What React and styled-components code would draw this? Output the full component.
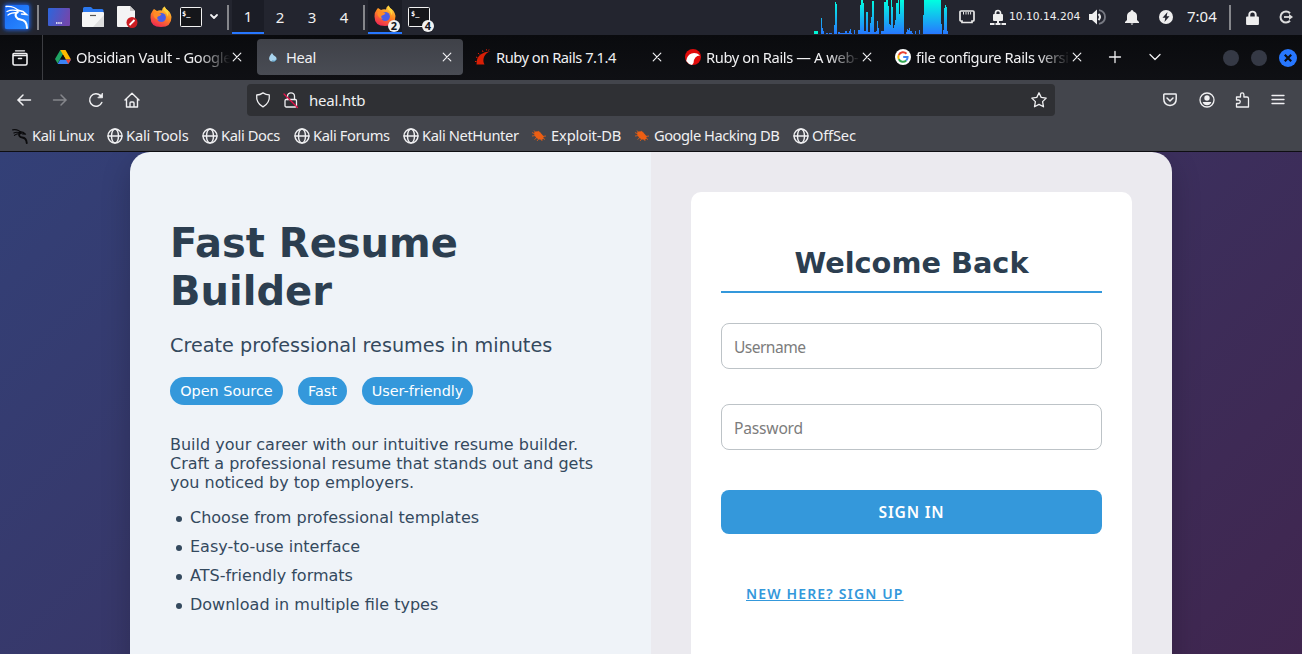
import React from "react";
import styled, { createGlobalStyle } from "styled-components";

const Global = createGlobalStyle`
  * { box-sizing: border-box; }
  html, body { margin: 0; padding: 0; }
  body { overflow: hidden; background: #0c0d11; }
`;

const ui = `"Noto Sans", "Open Sans", sans-serif`;
const page = `"DejaVu Sans", Verdana, sans-serif`;

const Screen = styled.div`
  width: 1302px;
  height: 654px;
  display: flex;
  flex-direction: column;
  overflow: hidden;
  font-family: ${ui};
`;

/* ---------- desktop panel ---------- */
const Panel = styled.header`
  height: 35px;
  flex: none;
  display: flex;
  align-items: stretch;
  justify-content: space-between;
  background: #23252f;
  color: #f0f0f0;
`;
const PanelGroup = styled.div`
  display: flex;
  align-items: stretch;
`;
const Slot = styled.div`
  width: ${(p) => p.$w}px;
  flex: none;
  display: flex;
  align-items: center;
  justify-content: center;
  padding-bottom: 1px;
  position: relative;
  svg { display: block; overflow: visible; }
`;
const PanelRule = styled.div`
  width: 2px;
  height: 25px;
  align-self: flex-start;
  margin: 5px 3px 0;
  background: #85868b;
  flex: none;
`;
const Workspace = styled(Slot)`
  height: 34px;
  padding-bottom: ${(p) => (p.$active ? 0 : 1)}px;
  font-size: 15px;
  border-bottom: ${(p) => (p.$active ? "2px solid #2777ff" : "0")};
  background: ${(p) => (p.$active ? "#1b1d26" : "transparent")};
`;
const Count = styled.span`
  position: absolute;
  right: 2px;
  bottom: ${(p) => p.$b}px;
  width: 12px;
  height: 12px;
  border-radius: 50%;
  background: #f2f2f2;
  color: #15161c;
  font: 700 11px/12px ${ui};
  text-align: center;
`;
const PanelText = styled.div`
  width: ${(p) => p.$w}px;
  flex: none;
  white-space: nowrap;
`;
const VpnAddress = styled(PanelText)`
  font: 10.7px/33px ${page};
`;
const Clock = styled(PanelText)`
  padding-left: 9px;
  font-size: 15px;
  line-height: 33px;
`;

/* ---------- browser chrome ---------- */
const TabBar = styled.div`
  height: 45px;
  flex: none;
  display: flex;
  background: linear-gradient(#0a0b0e, #0f1014);
  color: #f0f0f2;
`;
const PinnedView = styled(Slot)`
  border-right: 1px solid #3c3d42;
  margin-right: 4px;
  padding: 0 3px 0 0;
`;
const Tab = styled.div`
  width: 206px;
  height: 36px;
  flex: none;
  margin: 4px 4px 0 0;
  padding: 0 8px;
  display: flex;
  align-items: center;
  border-radius: 4px;
  background: ${(p) => (p.$active ? "linear-gradient(#3f4148, #494c54)" : "transparent")};
  svg { flex: none; display: block; }
`;
const TabTitle = styled.div`
  width: 156px;
  padding-left: 0;
  margin-left: 5px;
  flex: none;
  white-space: nowrap;
  font-size: 14.7px;
  line-height: 24px;
  letter-spacing: ${(p) => p.$ls}px;
  ${(p) => p.$fade && "mask-image: linear-gradient(90deg, #000 78%, transparent 99%);"}
`;
const WindowButton = styled.i`
  width: ${(p) => (p.$close ? 18 : 16)}px;
  height: ${(p) => (p.$close ? 18 : 16)}px;
  border-radius: 50%;
  background: ${(p) => (p.$close ? "#2777ff" : "#353945")};
  display: flex;
  align-items: center;
  justify-content: center;
`;
const WindowButtons = styled.div`
  display: flex;
  align-items: center;
  gap: 12px;
  margin-left: auto;
  padding-right: 5px;
`;
const NavBar = styled.div`
  height: 40px;
  flex: none;
  display: flex;
  align-items: center;
  padding-left: 6px;
  background: #43454c;
  color: #f0f0f2;
`;
const AddressBar = styled.div`
  width: 808px;
  height: 32px;
  margin: 0 97px 0 97px;
  display: flex;
  align-items: center;
  background: #2f3034;
  border-radius: 4px;
`;
const Address = styled.span`
  flex: 1;
  padding-left: 6px;
  font-size: 15px;
  letter-spacing: -0.2px;
`;
const Bookmarks = styled.nav`
  height: 32px;
  flex: none;
  display: flex;
  padding-left: 12px;
  border-bottom: 1px solid #0e0e12;
  background: #43454c;
  color: #f0f0f2;
`;
const Bookmark = styled.div`
  width: ${(p) => p.$w}px;
  flex: none;
  display: flex;
  align-items: center;
  gap: ${(p) => p.$gap}px;
  font-size: 14.7px;
  line-height: 31px;
  letter-spacing: ${(p) => p.$ls}px;
  white-space: nowrap;
  svg { flex: none; }
`;

/* ---------- page ---------- */
const Viewport = styled.main`
  flex: 1;
  min-height: 0;
  overflow: hidden;
  display: flex;
  justify-content: center;
  background: linear-gradient(135deg, #334077, #40264f);
  font-family: ${page};
`;
const Card = styled.div`
  width: 1042px;
  height: 620px;
  display: flex;
  border-radius: 20px;
  overflow: hidden;
  box-shadow: 0 10px 30px rgba(0, 0, 0, 0.2);
`;
const Intro = styled.section`
  width: 521px;
  padding: 67px 40px 0;
  background: #eff3f8;
  color: #34495e;
`;
const Title = styled.h1`
  margin: 0 0 19px;
  font-size: 40px;
  line-height: 48px;
  color: #2c3e50;
`;
const Subtitle = styled.p`
  margin: 0 0 19px;
  font-size: 19.2px;
  line-height: 24px;
  letter-spacing: 0.02px;
`;
const Badges = styled.div`
  display: flex;
  gap: 15px;
  margin-bottom: 30px;
`;
const Badge = styled.span`
  width: ${(p) => p.$w}px;
  height: 28px;
  border-radius: 15px;
  background: #3498db;
  color: #fff;
  font-size: 14.4px;
  line-height: 28px;
  text-align: center;
  white-space: nowrap;
`;
const Copy = styled.p`
  margin: 0 0 16px;
  font-size: 16px;
  line-height: 19px;
`;
const Features = styled.ul`
  margin: 0;
  padding: 0;
  list-style: none;
  font-size: 16px;
  line-height: 19px;
`;
const Feature = styled.li`
  display: flex;
  align-items: center;
  margin-bottom: 10px;
  padding-left: 6px;
  &::before {
    content: "";
    width: 6px;
    height: 6px;
    margin: 2px 8px 0 0;
    border-radius: 50%;
    background: #34495e;
  }
`;
const FormSide = styled.section`
  flex: 1;
  padding: 40px;
  background: #ebeaef;
`;
const FormBox = styled.form`
  height: 600px;
  padding: 50px 30px 0;
  display: flex;
  flex-direction: column;
  background: #fff;
  border-radius: 10px;
`;
const FormTitle = styled.h2`
  margin: 0 0 30px;
  height: 51px;
  font-size: 28.8px;
  line-height: 42px;
  text-align: center;
  color: #2c3e50;
  border-bottom: 2px solid #3498db;
`;
const Input = styled.input`
  height: 46px;
  flex: none;
  margin: 0 0 35px;
  padding: 1px 12px 0;
  border: 1px solid #bdc3c7;
  border-radius: 8px;
  background: #fff;
  font: 15.6px ${ui};
  letter-spacing: ${(p) => p.$ls}px;
  outline: 0;
  &::placeholder { color: #7c7c7c; opacity: 1; }
`;
const Submit = styled.button`
  height: 44px;
  flex: none;
  margin: 5px 0 46px;
  border: 0;
  border-radius: 8px;
  background: #3498db;
  color: #fff;
  font: 600 15.6px ${ui};
  letter-spacing: 0.8px;
`;
const SignUp = styled.a`
  align-self: flex-start;
  margin-left: 25px;
  font: 600 14px/28px ${ui};
  letter-spacing: 1.15px;
  color: #3498db;
  text-decoration: underline;
`;

/* ---------- icons ---------- */
const Svg = ({ s = 16, w, h, v, children, ...rest }) => (
  <svg width={w || s} height={h || s} viewBox={v || `0 0 ${w || s} ${h || s}`} fill="none" {...rest}>{children}</svg>
);
const Line = (props) => <Svg stroke="#f0f0f2" strokeWidth="1.3" strokeLinecap="round" strokeLinejoin="round" {...props} />;

const Dragon = () => (
  <Svg s={16} v="0 0 26 26" stroke="#0b0b0d" strokeLinecap="round" strokeLinejoin="round">
    <path d="M1 3c5-1 11 1 14 5M3 8c4-2 8-1 12 0M4 12c3-3 7-3 11-3" strokeWidth="1.8" />
    <path d="M13 6l5 1 4 3-5-.3" strokeWidth="2" />
    <path d="M13.500 8c-4 3-1 7 3 7.500 4.500.5 7 3 7.500 9" strokeWidth="3" />
  </Svg>
);
const KaliMenu = () => (
  <Svg w={26} h={26}>
    <defs>
      <linearGradient id="km" x2="1" y2="1"><stop stopColor="#1768f5" /><stop offset="1" stopColor="#2a8aff" /></linearGradient>
      <filter id="glow" x="-.3" y="-.3" width="1.6" height="1.6"><feGaussianBlur stdDeviation="2" /></filter>
    </defs>
    <rect x="0" y="0" width="26" height="26" rx="3" fill="#1d62e8" filter="url(#glow)" />
    <rect x="1" y="1" width="24" height="24" rx="1.500" fill="url(#km)" />
    <g stroke="#fff" strokeLinecap="round" fill="none">
      <path d="M2 2.500c5-.5 10 1.500 13 4.500M3 7.500c4-2 8-1.500 11-.5M4 11c3-2.500 6-2.500 10-2.500" strokeWidth="1.300" />
      <path d="M13 6l6 1.500 3.500 3-5-.5" strokeWidth="1.500" />
      <path d="M13.500 8c-4 3-1 7 3 7.500 4 .5 6.500 3 6.500 8.500" strokeWidth="2" />
    </g>
  </Svg>
);
const Desktop = () => (
  <Svg w={22} h={18}>
    <defs><linearGradient id="dk" x2="1" y2=".3"><stop stopColor="#2b66dd" /><stop offset="1" stopColor="#7048ae" /></linearGradient></defs>
    <rect width="22" height="18" rx="1" fill="url(#dk)" />
    <path d="M8 15h1.500m.7 0h1.500m.7 0h1.500" stroke="#fff" strokeWidth="1.500" />
  </Svg>
);
const Files = () => (
  <Svg w={22} h={20}>
    <path d="M1 8V1.500Q1 0 2.500 0H9l2 2h9q1.500 0 1.500 1.500V8z" fill="#2b78ee" />
    <rect y="5" width="22" height="15" rx="1" fill="#f5f5f5" />
    <path d="M22 8v11q0 1-1 1h-10z" fill="#dedede" />
    <path d="M8 8.500h6" stroke="#555" strokeWidth="1.200" />
  </Svg>
);
const Editor = () => (
  <Svg w={20} h={22}>
    <path d="M1 0h12l5 5v16H1q-1 0-1-1V1q0-1 1-1z" fill="#f4f4f4" />
    <path d="M13 0l5 5h-5z" fill="#c9c9c9" />
    <circle cx="15" cy="16.500" r="5.500" fill="#cc1d22" />
    <path d="M12.500 19l5-5" stroke="#fff" strokeWidth="1.800" />
  </Svg>
);
const Firefox = () => (
  <Svg w={22} h={22}>
    <defs><linearGradient id="fx" x1=".8" y1="0" x2=".3" y2="1"><stop stopColor="#ffe04a" /><stop offset=".45" stopColor="#ff8a20" /><stop offset="1" stopColor="#ef2653" /></linearGradient></defs>
    <path d="M4 3l3 2q2-1 5-.5Q12 2 14.500.5q1 2.500 3.500 4t3.500 6.500q0 10-10.500 10T.5 11.500Q.5 7 2.500 5q.5-1 1.500-2z" fill="url(#fx)" />
    <circle cx="11.300" cy="11.500" r="4.600" fill="#4b5ee8" />
    <path d="M3.500 7q3-2 5 0l3 1q-1 2-3.500 2.500Q6 12 9 14q-4-.5-5.500-4z" fill="#ff8b27" />
    <path d="M14.500.5q-2 3 .5 5t2 5q2-3 1-6-2.500-1.500-3.500-4z" fill="#ffd43c" />
  </Svg>
);
const TermText = styled.span`
  position: absolute;
  left: ${(p) => p.$x}px;
  top: 10px;
  color: #fff;
  font: 700 7px/8px "DejaVu Sans Mono", monospace;
`;
const Terminal = () => (
  <Svg w={22} h={20}><rect x=".5" y=".5" width="21" height="19" rx="1" fill="#15161a" stroke="#f2f2f2" /></Svg>
);
const Close = () => <Line s={10} strokeWidth="1.200"><path d="M1.200 1.200l7.600 7.600M8.800 1.200L1.200 8.800" /></Line>;
const Drive = () => (
  <Svg w={16} h={14}>
    <path d="M5.300 0h5.200L5.200 9 2.600 13.500 0 9z" fill="#1fa463" />
    <path d="M5.300 0h5.200L16 9.500h-5.300z" fill="#ffba00" />
    <path d="M5.200 9.500H16l-2.700 4.500H2.600z" fill="#3b82f4" />
    <path d="M10.800 9.500H16l-2.700 4.500z" fill="#e8453c" />
    <path d="M8 4.800l2.800 4.700H5.200z" fill="#0d0e12" />
  </Svg>
);
const Drop = () => <Svg s={16}><path d="M7 4q1 2.500 4 4 1.500 2.500-1 4Q6 13.500 4.500 11T7 4z" fill="#a9d4ee" /><path d="M7 12q3 1 4.500-1.500" stroke="#4f93ba" /></Svg>;
const Rails = () => (
  <Svg s={16}>
    <path d="M1.500 15.500q0-7 4-10T15.500 2.200Q10.500 4 9 8t.5 7.500z" fill="#d81f06" />
    <path d="M1 8l1.500.7M3 4l1.200 1.300M7.500 1.500l.5 1.500M11.500.3l.2 1.200M0 12.500h1.500M14 .5l-.5 1" stroke="#d81f06" />
  </Svg>
);
const RailsRound = () => <Svg s={16}><circle cx="8" cy="8" r="8" fill="#e00b0b" /><path d="M1.200 12Q2 6 6.500 4.500T15 6.500Q9 6.500 8.500 14L7 16Q3.500 15.500 1.200 12z" fill="#fff" /></Svg>;
const Google = () => (
  <Svg s={16}>
    <circle cx="8" cy="8" r="8" fill="#fff" />
    <g strokeWidth="2"><path d="M11.500 4.800A4.700 4.700 0 0 0 3.800 6" stroke="#ea4335" /><path d="M3.800 6a4.700 4.700 0 0 0 0 4.200" stroke="#fbbc05" /><path d="M3.800 10.200a4.700 4.700 0 0 0 7.400 1.300" stroke="#34a853" /><path d="M11.200 11.500q1.500-1.300 1.400-3.500H8.200" stroke="#4285f4" /></g>
  </Svg>
);
const Globe = () => <Line s={16} strokeWidth="1.400"><circle cx="8" cy="8" r="7" /><ellipse cx="8" cy="8" rx="3.500" ry="7" /><path d="M1 8h14" /></Line>;
const Bug = () => (
  <Svg s={16}>
    <path d="M3.500 4q3.500-2 6 .7t3 3.600q.3 3.500-2.500 3.500T5 9.500Q2.500 6.500 3.500 4z" fill="#ec5e13" />
    <path d="M1 4.500l4 2M1 8l4-.5M3.500 11.500l3-2.500M6 13l2-2.500M10.500 11l.5 2M7 3l2.500 2M11 8.500l4-.5M11.500 10l2.500 1.500M3 2.500L5 5" stroke="#ec5e13" strokeWidth=".8" />
  </Svg>
);
const Padlock = ({ w = 12, h = 14 }) => <Svg w={w} h={h} v="0 0 12 14"><path d="M3 7V4.500a3 3 0 0 1 6 0V7" stroke="#eee" strokeWidth="1.800" /><rect y="6" width="12" height="8" rx="1" fill="#eee" /></Svg>;

/* [x offset, width, top], one unit is a third of a pixel */
const load = [
  [0, 12, 93], [21, 3, 54], [24, 3, 83], [27, 3, 92], [36, 6, 99], [45, 9, 99], [60, 3, 74], [63, 3, 6], [66, 3, 12],
  [72, 6, 97], [78, 15, 99], [93, 6, 93], [99, 6, 99], [105, 3, 94], [108, 3, 87], [111, 3, 98], [120, 3, 90],
  [132, 6, 90], [138, 3, 14], [141, 6, 0], [147, 3, 8], [150, 6, 94], [156, 6, 37], [162, 6, 97], [168, 3, 69],
  [171, 3, 50], [174, 6, 2], [180, 6, 95], [186, 3, 94], [189, 3, 62], [192, 3, 84], [201, 9, 94], [210, 6, 5],
  [216, 6, 0], [222, 3, 18], [225, 3, 72], [228, 3, 75], [231, 3, 0], [234, 3, 20], [237, 3, 84], [240, 3, 74],
  [243, 3, 60], [246, 6, 8], [252, 3, 0], [255, 3, 42], [258, 12, 0], [276, 3, 96], [279, 3, 87], [282, 3, 90],
  [285, 3, 84], [288, 6, 94], [294, 3, 98], [303, 3, 93], [315, 3, 90], [327, 3, 45], [330, 51, 0], [381, 3, 72],
  [387, 3, 90], [390, 3, 24], [393, 3, 15], [396, 3, 22], [399, 3, 94],
];
const Graph = () => (
  <Svg w={134} h={34} v="0 0 402 102">
    <defs><linearGradient id="ld" gradientUnits="userSpaceOnUse" x1="0" y1="0" x2="0" y2="102"><stop stopColor="#00ffe0" /><stop offset="1" stopColor="#2777ff" /></linearGradient></defs>
    {load.map(([x, w, y], i) => <rect key={i} x={x} y={y} width={w} height={102 - y} fill={i ? "url(#ld)" : "#00f5d4"} shapeRendering="crispEdges" />)}
  </Svg>
);

/* name, icon, width, letter spacing, gap */
const bookmarks = [
  ["Kali Linux", Dragon, 95, -0.4, 4], ["Kali Tools", Globe, 95, -0.2, 3], ["Kali Docs", Globe, 92, -0.4, 3],
  ["Kali Forums", Globe, 109, -0.4, 3], ["Kali NetHunter", Globe, 128, -0.4, 3], ["Exploit-DB", Bug, 103, -0.15, 4],
  ["Google Hacking DB", Bug, 159, -0.48, 4], ["OffSec", Globe, 80, -0.2, 3],
];
/* title, icon, fades out, letter spacing */
const tabs = [
  ["Obsidian Vault - Google", Drive, true, -0.3], ["Heal", Drop, false, -0.3],
  ["Ruby on Rails 7.1.4", Rails, false, -0.48], ["Ruby on Rails — A web-", RailsRound, true, -0.4],
  ["file configure Rails versi", Google, true, -0.4],
];

export default function App() {
  return (
    <Screen>
      <Global />
      <Panel>
        <PanelGroup>
          <Slot $w={34}><KaliMenu /></Slot>
          <PanelRule />
          <Slot $w={34}><Desktop /></Slot>
          <Slot $w={34}><Files /></Slot>
          <Slot $w={34}><Editor /></Slot>
          <Slot $w={34}><Firefox /></Slot>
          <Slot $w={26}><Terminal /><TermText $x={4}>$_</TermText></Slot>
          <Slot $w={20}><Line w={8} h={6} strokeWidth="1.800"><path d="M1 1l3 3 3-3" /></Line></Slot>
          <PanelRule />
          <Workspace $w={32} $active>1</Workspace>
          <Workspace $w={32}>2</Workspace>
          <Workspace $w={32}>3</Workspace>
          <Workspace $w={32}>4</Workspace>
          <PanelRule />
          <Workspace $w={34} $active><Firefox /><Count $b={0}>2</Count></Workspace>
          <Slot $w={34}><Terminal /><TermText $x={9}>$_</TermText><Count $b={3}>4</Count></Slot>
        </PanelGroup>
        <PanelGroup>
          <Graph />
          <Slot $w={38}>
            <Svg w={16} h={14}><path d="M2 1h12q1 0 1 1v8q0 1-1 1h-1v1.500H3V11H2q-1 0-1-1V2q0-1 1-1z" stroke="#e8e8e8" strokeWidth="1.700" /><path d="M4.500 2v2.500M7 2v2.500M9.300 2v2.500M11.600 2v2.500" stroke="#e8e8e8" /></Svg>
          </Slot>
          <Slot $w={23}>
            <Svg w={16} h={17}><path d="M5.500 6V4a2.500 2.500 0 0 1 5 0v2" stroke="#eee" strokeWidth="1.700" /><rect x="3" y="5" width="10" height="7" rx="1" fill="#eee" /><path d="M8 12v2M0 15h4.500M5.500 15h5M11.500 15H16" stroke="#eee" strokeWidth="2" /></Svg>
          </Slot>
          <VpnAddress $w={76}>10.10.14.204</VpnAddress>
          <Slot $w={25}>
            <Svg w={17} h={16}><path d="M0 5h3l5-4.500v15L3 11H0z" fill="#eee" /><path d="M9.500 5q3 3 0 6" stroke="#eee" strokeWidth="2" /><path d="M10 1.200q6 1.300 6 6.800t-6 6.800" stroke="#777982" strokeWidth="1.800" /></Svg>
          </Slot>
          <Slot $w={44}>
            <Svg w={14} h={15}><path d="M7 0q1.300 0 1.500 1.500Q12 2.500 12 6v4l2 2v1H0v-1l2-2V6q0-3.500 3.500-4.500Q5.700 0 7 0zM5.500 13.500h3L7 15z" fill="#eee" /></Svg>
          </Slot>
          <Slot $w={24}>
            <Svg s={14}><circle cx="7" cy="7" r="7" fill="#eee" /><path d="M8.500 2L3.500 7.800h2.800L5.500 12l5-5.800H7.700z" fill="#23252f" /></Svg>
          </Slot>
          <Clock $w={48}>7:04</Clock>
          <PanelRule />
          <Slot $w={36}><Padlock w={13} h={15} /></Slot>
          <Slot $w={32}>
            <Svg s={14}><path d="M11 3.200a5.500 5.500 0 1 0 0 7.600" stroke="#ddd" strokeWidth="2" /><path d="M5 7h6" stroke="#ddd" strokeWidth="1.800" /><path d="M10 4l4 3-4 3z" fill="#ddd" /></Svg>
          </Slot>
        </PanelGroup>
      </Panel>

      <TabBar>
        <PinnedView $w={43}>
          <Line s={16} strokeWidth="1.600"><path d="M3.500.8h9" strokeWidth="1.300" /><path d="M1 4.500q0-1 1-1h12q1 0 1 1M1 5v8.500Q1 15 2.500 15h11q1.500 0 1.500-1.500V5M1 5.500h14M6.500 8.500h3" /></Line>
        </PinnedView>
        {tabs.map(([title, Icon, fade, ls]) => (
          <Tab key={title} $active={title === "Heal"}>
            <Icon />
            <TabTitle $fade={fade} $ls={ls}>{title}</TabTitle>
            <Close />
          </Tab>
        ))}
        <Slot $w={35}><Line s={12}><path d="M6 .5v11M.5 6h11" /></Line></Slot>
        <Slot $w={46}><Line w={12} h={8}><path d="M1 1.500l5 5 5-5" /></Line></Slot>
        <WindowButtons>
          <WindowButton /><WindowButton />
          <WindowButton $close><Svg s={8}><path d="M.8.800l6.400 6.400M7.200.800L.8 7.200" stroke="#0d0e12" strokeWidth="2.200" /></Svg></WindowButton>
        </WindowButtons>
      </TabBar>

      <NavBar>
        <Slot $w={36}><Line w={14} h={12} strokeWidth="1.500"><path d="M13.500 6H.8M6 1L1 6l5 5" /></Line></Slot>
        <Slot $w={36}><Line w={14} h={12} stroke="#85868b" strokeWidth="1.500"><path d="M.5 6h12.700M8 1l5 5-5 5" /></Line></Slot>
        <Slot $w={36}><Line s={16} strokeWidth="1.500"><path d="M13.800 10.500A6.300 6.300 0 1 1 12.500 3.600" /><path d="M14.500 1.500v4.300h-4.300z" fill="#f0f0f2" strokeWidth=".8" /></Line></Slot>
        <Slot $w={36}><Line s={16} strokeWidth="1.400"><path d="M1 8l7-6.700L15 8M2.500 7v8h11V7M6 15v-4q0-1 1-1h2q1 0 1 1v4" /></Line></Slot>
        <AddressBar>
          <Slot $w={32}><Line s={16}><path d="M8 .9q3 2 6.300 2 .8 8-6.300 12Q.9 11 1.700 3 5 3 8 .9z" /></Line></Slot>
          <Slot $w={24}><Line s={16}><rect x="2" y="7.500" width="11.500" height="7.500" rx="1.200" /><path d="M4.500 7.500V4.300a3.500 3.500 0 0 1 7 0v3.200" /><path d="M1 2l13.500 13.500" stroke="#e8114b" /></Line></Slot>
          <Address>heal.htb</Address>
          <Slot $w={32}><Line s={16}><path d="M8 .8l2.200 4.600 5 .7-3.600 3.500.9 5.200L8 12.400l-4.500 2.400.9-5.200L.8 6.100l5-.7z" /></Line></Slot>
        </AddressBar>
        <Slot $w={36}><Line s={14} strokeWidth="1.500"><path d="M1.500 1h11q.7 0 .7.700V6q0 6-6.200 6.500Q.8 12 .8 6V1.700q0-.7.700-.7zM4 5l3 3 3-3" /></Line></Slot>
        <Slot $w={37}><Line s={16}><circle cx="8" cy="8" r="7" /><circle cx="8" cy="6" r="2.700" fill="#f0f0f2" stroke="none" /><path d="M3.700 10h8.600q-1 3.300-4.300 3.300T3.700 10z" fill="#f0f0f2" stroke="none" /></Line></Slot>
        <Slot $w={36}><Line s={16}><path d="M1.500 5h4V2.500a1.700 1.700 0 0 1 3.400 0V5H12q1.500 0 1.500 1.500V15h-12v-3.500h2a1.700 1.700 0 0 0 0-3.500h-2z" /></Line></Slot>
        <Slot $w={34}><Line w={12} h={11}><path d="M0 1.500h12M0 5.500h12M0 9.500h12" /></Line></Slot>
      </NavBar>

      <Bookmarks>
        {bookmarks.map(([name, Icon, w, ls, gap]) => (
          <Bookmark key={name} $w={w} $ls={ls} $gap={gap}>
            <Icon />
            {name}
          </Bookmark>
        ))}
      </Bookmarks>

      <Viewport>
        <Card>
          <Intro>
            <Title>Fast Resume<br />Builder</Title>
            <Subtitle>Create professional resumes in minutes</Subtitle>
            <Badges><Badge $w={113}>Open Source</Badge><Badge $w={49}>Fast</Badge><Badge $w={111}>User-friendly</Badge></Badges>
            <Copy>Build your career with our intuitive resume builder. Craft a professional resume that stands out and gets you noticed by top employers.</Copy>
            <Features>
              <Feature>Choose from professional templates</Feature>
              <Feature>Easy-to-use interface</Feature>
              <Feature>ATS-friendly formats</Feature>
              <Feature>Download in multiple file types</Feature>
            </Features>
          </Intro>
          <FormSide>
            <FormBox>
              <FormTitle>Welcome Back</FormTitle>
              <Input placeholder="Username" $ls={-0.56} />
              <Input placeholder="Password" $ls={-0.2} />
              <Submit type="button">SIGN IN</Submit>
              <SignUp>NEW HERE? SIGN UP</SignUp>
            </FormBox>
          </FormSide>
        </Card>
      </Viewport>
    </Screen>
  );
}
